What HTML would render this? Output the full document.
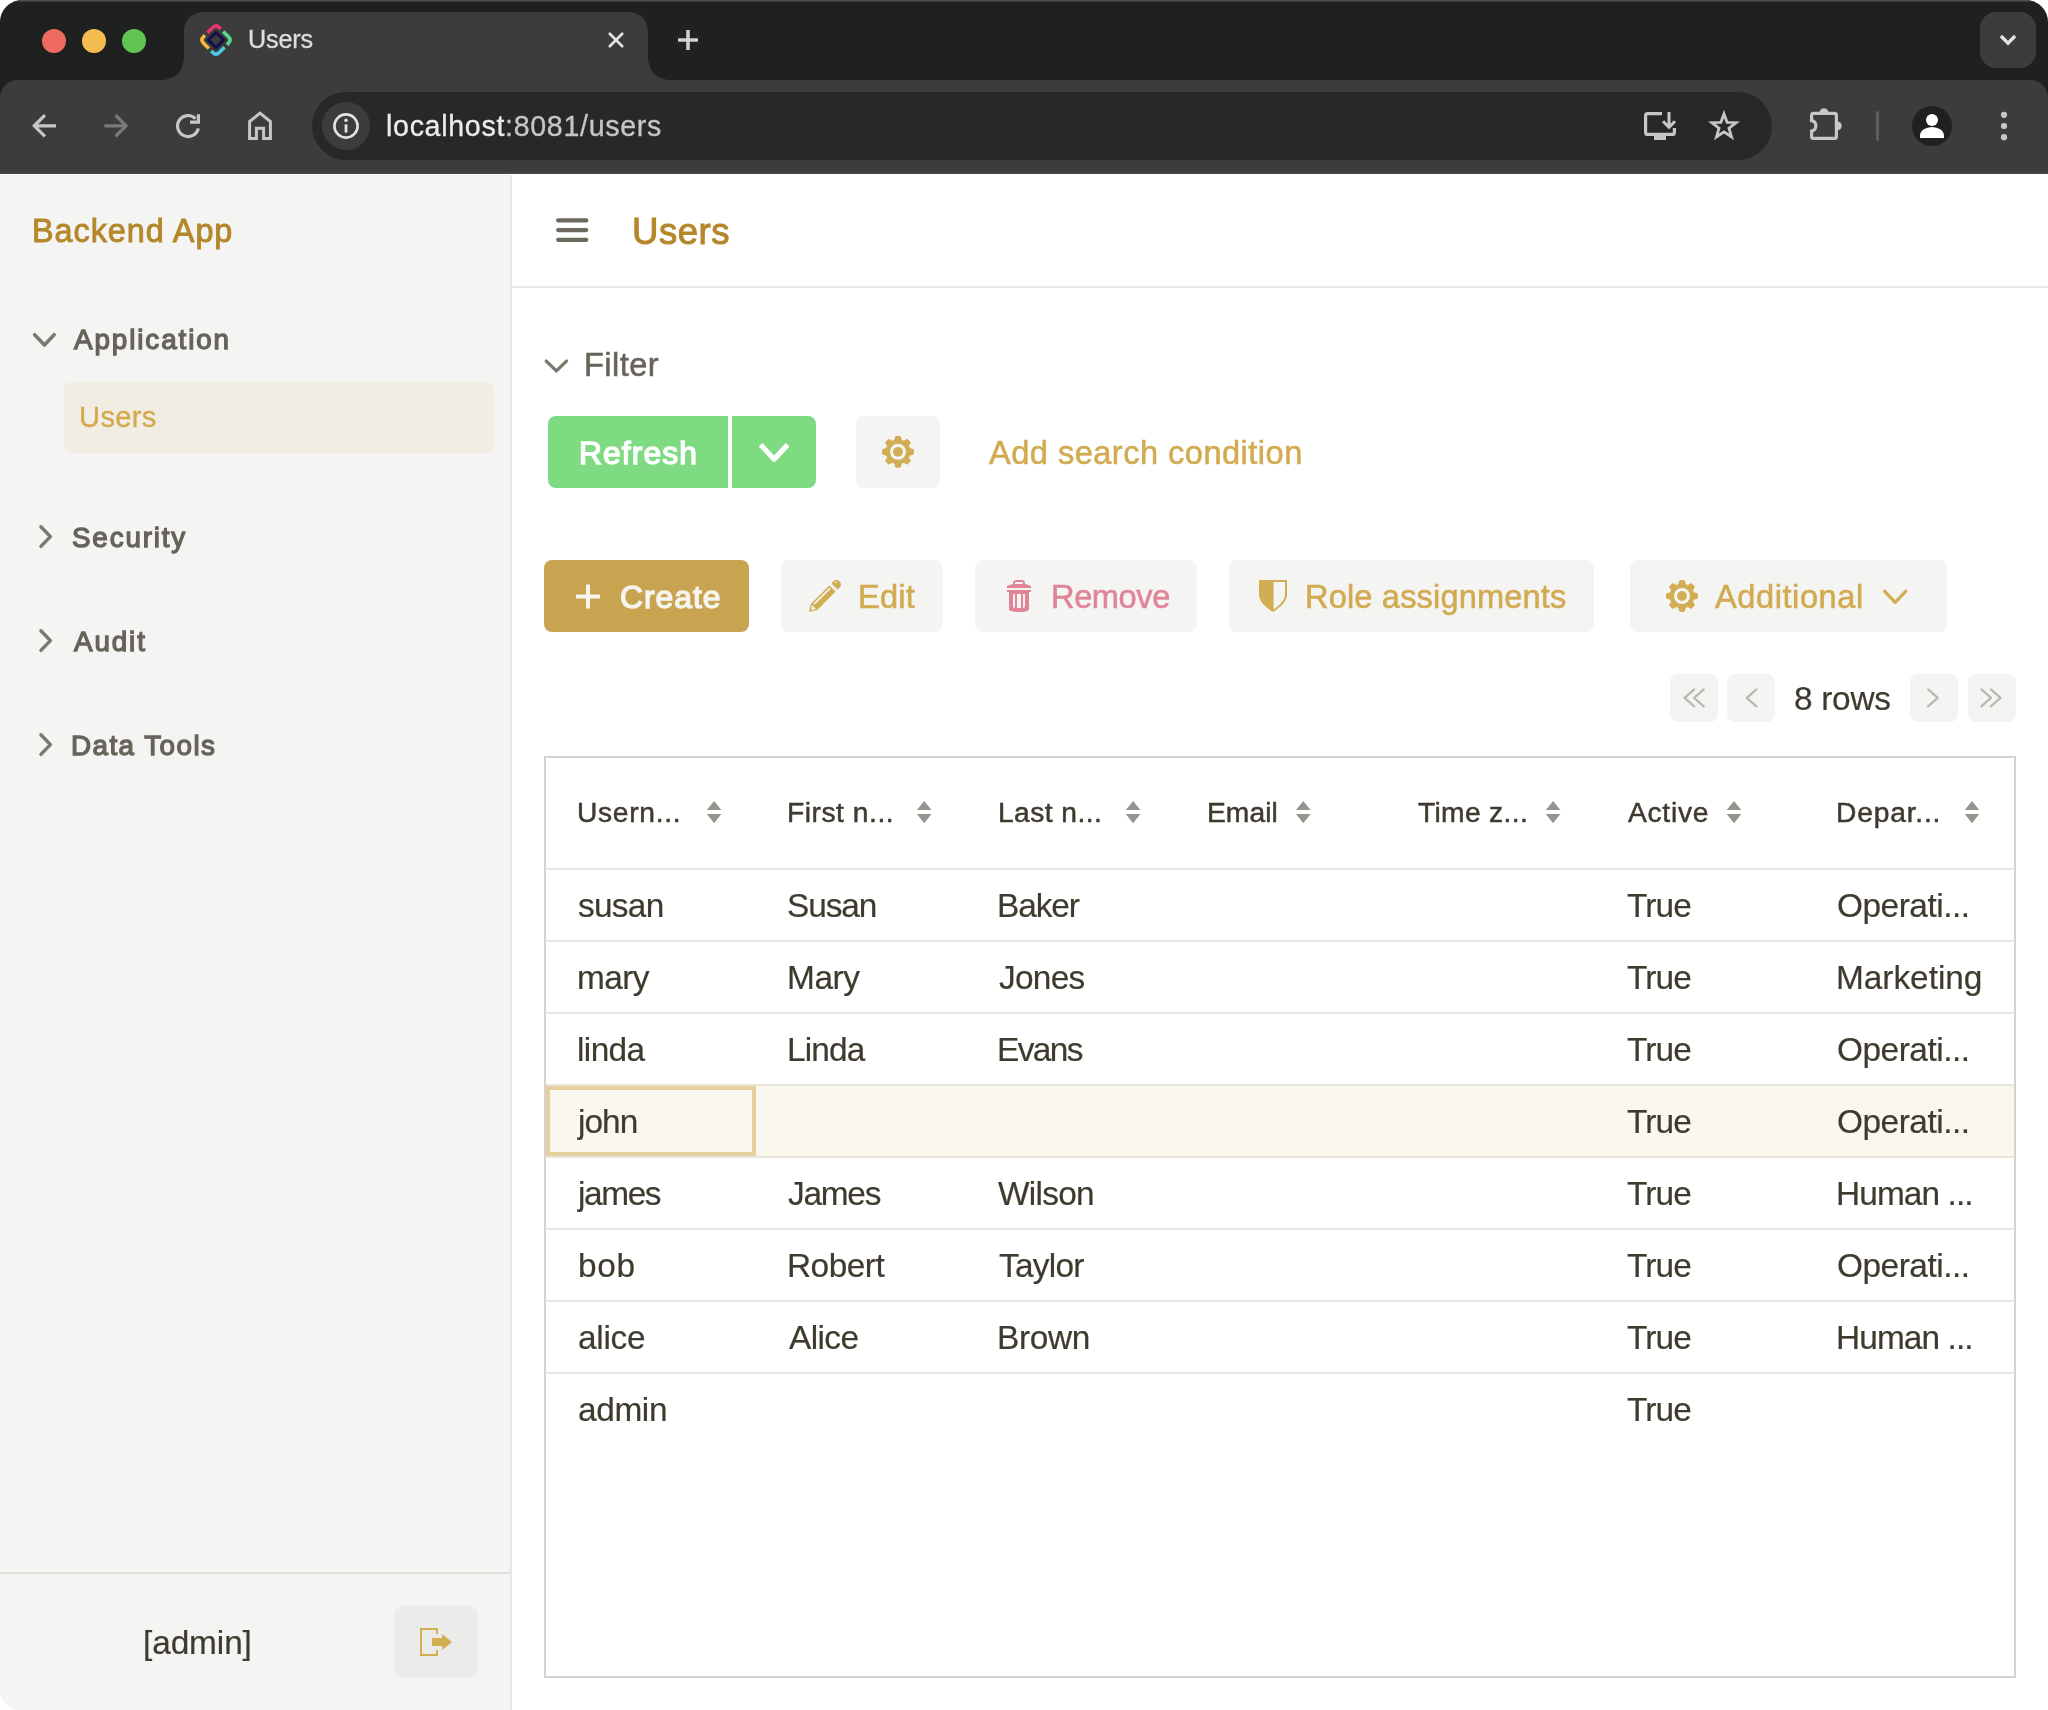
<!DOCTYPE html>
<html lang="en">
<head>
<meta charset="utf-8">
<title>Users</title>
<style>
*{box-sizing:border-box;margin:0;padding:0}
html,body{width:2048px;height:1710px;background:#fff;overflow:hidden}
body{font-family:"Liberation Sans",sans-serif;color:#3f3a2e;position:relative}
.win{position:absolute;left:0;top:0;width:2048px;height:1710px;border-radius:22px 22px 20px 20px;overflow:hidden;background:#fff}
.abs{position:absolute}
.t{position:absolute;white-space:nowrap;line-height:1;will-change:transform}
/* ---------- browser chrome ---------- */
.tabstrip{position:absolute;left:0;top:0;width:2048px;height:110px;background:#1f2020}
.hl{position:absolute;left:0;top:0;width:2048px;height:2px;background:linear-gradient(#5a5b5b,#2b2c2c)}
.toolbar{position:absolute;left:0;top:80px;width:2048px;height:94px;background:#3c3c3c;border-radius:18px 18px 0 0;border-bottom:2px solid #424544}
.omni{position:absolute;left:312px;top:12px;width:1460px;height:68px;border-radius:34px;background:#282828}
.dot{position:absolute;top:29px;width:24px;height:24px;border-radius:50%}
.chr{font-family:"Liberation Sans",sans-serif;color:#e3e3e3}
/* ---------- app ---------- */
.side{position:absolute;left:0;top:175px;width:510px;height:1535px;background:#f4f4f2}
.sideline{position:absolute;left:510px;top:175px;width:2px;height:1535px;background:#e8e7e5}
.main{position:absolute;left:512px;top:174px;width:1536px;height:1536px;background:#fff}
.gold{color:#b5872b}
.lgold{color:#d2a94f}
.grey{color:#67635a}
.btn{position:absolute;height:72px;border-radius:8px;background:#f4f4f2}
.pg{position:absolute;top:674px;width:48px;height:48px;border-radius:8px;background:#f4f4f2}
.hline{position:absolute;left:546px;width:1468px;height:2px;background:#e8e7e5}
.cell{position:absolute;white-space:nowrap;line-height:1;font-size:31px;color:#3f3a2e}
.hd{position:absolute;white-space:nowrap;line-height:1;font-size:28px;color:#3f3a2e;-webkit-text-stroke:0.5px #3f3a2e}
</style>
</head>
<body>
<div class="win">

<!-- ================= BROWSER CHROME ================= -->
<div class="tabstrip">
  <div class="hl"></div>
  <div class="dot" style="left:42px;background:#ee6a5e"></div>
  <div class="dot" style="left:82px;background:#f5bd4f"></div>
  <div class="dot" style="left:122px;background:#61c554"></div>
  <!-- active tab -->
  <svg class="abs" style="left:160px;top:12px" width="512" height="68" viewBox="0 0 512 68">
    <path d="M0 68 C14 68 24 60 24 44 V20 C24 8 32 0 44 0 H468 C480 0 488 8 488 20 V44 C488 60 498 68 512 68 Z" fill="#3c3c3c"/>
  </svg>
  <!-- favicon -->
  <svg class="abs" style="left:196px;top:20px" width="40" height="40" viewBox="-20 -20 40 40" fill="none" stroke-width="3.5">
   <g transform="rotate(45)">
    <path d="M-11.1 1.0 V-6.50 Q-11.1 -11.1 -6.50 -11.1 H-4.5" stroke="#e8336d" transform="rotate(0)"/>
    <path d="M-11.1 1.0 V-6.50 Q-11.1 -11.1 -6.50 -11.1 H-4.5" stroke="#5cd68c" transform="rotate(90)"/>
    <path d="M-11.1 1.0 V-6.50 Q-11.1 -11.1 -6.50 -11.1 H-4.5" stroke="#4dc9e6" transform="rotate(180)"/>
    <path d="M-11.1 1.0 V-6.50 Q-11.1 -11.1 -6.50 -11.1 H-4.5" stroke="#f7b93f" transform="rotate(270)"/>
    <rect x="-5.45" y="-5.45" width="10.9" height="10.9" stroke="#16104a" stroke-width="3.1" stroke-linejoin="round"/>
   </g>
  </svg>
  <!-- tab close -->
  <svg class="abs" style="left:604px;top:28px" width="24" height="24" viewBox="0 0 24 24" fill="none" stroke="#e3e3e3" stroke-width="2.6" stroke-linecap="butt"><path d="M5 5 L19 19 M19 5 L5 19"/></svg>
  <!-- new tab -->
  <svg class="abs" style="left:674px;top:26px" width="28" height="28" viewBox="0 0 28 28" fill="none" stroke="#cfcfcf" stroke-width="3.6"><path d="M14 4 V24 M4 14 H24"/></svg>
  <!-- tab search -->
  <div class="abs" style="left:1980px;top:12px;width:56px;height:56px;border-radius:16px;background:#3c3c3c"></div>
  <svg class="abs" style="left:1996px;top:28px" width="24" height="24" viewBox="0 0 24 24" fill="none" stroke="#e3e3e3" stroke-width="3.4"><path d="M4.900 8 L12 15.100 L19.100 8"/></svg>
</div>

<div class="toolbar">
  <div class="omni">
    <div class="abs" style="left:10px;top:10px;width:48px;height:48px;border-radius:50%;background:#3c3c3c"></div>
  </div>
  <div class="abs" style="left:1876px;top:31px;width:3px;height:30px;border-radius:2px;background:#5e5e5e"></div>
  <!-- profile -->
  <div class="abs" style="left:1912px;top:26px;width:40px;height:40px;border-radius:50%;background:#1f2020;overflow:hidden">
    <div class="abs" style="left:13.700px;top:7.800px;width:12.600px;height:12.600px;border-radius:50%;background:#fff"></div>
    <div class="abs" style="left:7.800px;top:20.800px;width:24.400px;height:11.400px;border-radius:12.200px 12.200px 0 0 / 9px 9px 0 0;background:#fff"></div>
  </div>
</div>
<!-- toolbar icons, absolute pixel coordinates -->
<svg class="abs" style="left:0;top:0" width="2048" height="176" viewBox="0 0 2048 176" fill="none" stroke="#c7c7c7" stroke-width="3.2">
  <!-- back -->
  <path d="M56 125.800 H35 M44.900 115.200 L34.300 125.800 L44.900 136.400"/>
  <!-- forward -->
  <path d="M104.400 125.800 H125.400 M115.500 115.200 L126.100 125.800 L115.500 136.400" stroke="#7a7a7a"/>
  <!-- reload -->
  <path d="M198.300 128.300 A10.500 10.500 0 1 1 195.500 118.600"/>
  <path d="M198.400 114.200 V122.100 H190"/>
  <!-- home -->
  <path d="M249.600 138.400 V121.500 L260 113.200 L270.400 121.500 V138.400 H263.600 V128.300 H256.400 V138.400 Z" stroke-width="3"/>
  <!-- info -->
  <circle cx="346" cy="126" r="11.600" stroke="#e3e3e3" stroke-width="2.600"/>
  <path d="M346 124.400 V132.600" stroke="#e3e3e3" stroke-width="2.800"/>
  <circle cx="346" cy="120.300" r="1.700" fill="#e3e3e3" stroke="none"/>
  <!-- install -->
  <path d="M1662 113.600 H1647.600 Q1645.600 113.600 1645.600 115.600 V132.400 Q1645.600 134.400 1647.600 134.400 H1672.400 Q1674.400 134.400 1674.400 132.400 V128" stroke-width="3.200"/>
  <path d="M1654 134.400 H1666 V140 H1654 Z" fill="#c7c7c7" stroke="none"/>
  <path d="M1669 112 V126.500 M1663 121.300 L1669 127.300 L1675 121.300" stroke-width="3"/>
  <!-- star -->
  <path d="M1724.0 113.9 L1727.1 122.3 L1736.1 122.7 L1729.0 128.2 L1731.5 136.9 L1724.0 131.9 L1716.5 136.9 L1719.0 128.2 L1711.9 122.7 L1720.9 122.3 Z" stroke-width="2.800" stroke-linejoin="miter"/>
  <!-- extensions -->
  <path d="M1813.500 113.400 H1834.500 Q1836.400 113.400 1836.400 115.300 V136.500 Q1836.400 138.400 1834.500 138.400 H1813.500 Q1811.600 138.400 1811.600 136.500 V131 A5.300 5.300 0 0 0 1811.600 120.600 V115.300 Q1811.600 113.400 1813.500 113.400 Z" stroke-width="3.200"/>
  <path d="M1819.600 112.600 A4.400 4.400 0 0 1 1828.400 112.600 Z" fill="#c7c7c7" stroke="none"/>
  <path d="M1837.400 121.400 A4.400 4.400 0 0 1 1837.400 130.200 Z" fill="#c7c7c7" stroke="none"/>
  <!-- menu dots -->
  <circle cx="2004" cy="114.800" r="3.100" fill="#c7c7c7" stroke="none"/>
  <circle cx="2004" cy="126" r="3.100" fill="#c7c7c7" stroke="none"/>
  <circle cx="2004" cy="137.200" r="3.100" fill="#c7c7c7" stroke="none"/>
</svg>

<!-- ================= APP ================= -->
<div class="side"></div>
<div class="sideline"></div>
<div class="main"></div>

<div class="abs" style="left:64px;top:382px;width:430px;height:71px;border-radius:8px;background:#f1ede2"></div>
<div class="abs" style="left:0;top:1572px;width:510px;height:2px;background:#e0dfdc"></div>
<div class="abs" style="left:394px;top:1606px;width:84px;height:72px;border-radius:9px;background:#ebebe9"></div>
<div class="abs" style="left:512px;top:286px;width:1536px;height:2px;background:#e9e8e6"></div>
<div class="abs" style="left:548px;top:416px;width:180px;height:72px;border-radius:8px 0 0 8px;background:#7edb82"></div>
<div class="abs" style="left:732px;top:416px;width:84px;height:72px;border-radius:0 8px 8px 0;background:#7edb82"></div>
<div class="btn" style="left:856px;top:416px;width:84px"></div>
<div class="btn" style="left:544px;top:560px;width:205px;background:#c8a450"></div>
<div class="btn" style="left:781px;top:560px;width:162px"></div>
<div class="btn" style="left:975px;top:560px;width:222px"></div>
<div class="btn" style="left:1229px;top:560px;width:365px"></div>
<div class="btn" style="left:1630px;top:560px;width:317px"></div>
<div class="pg" style="left:1670px"></div>
<div class="pg" style="left:1727px"></div>
<div class="pg" style="left:1910px"></div>
<div class="pg" style="left:1968px"></div>
<div class="abs" style="left:544px;top:756px;width:1472px;height:922px;border:2px solid #d4d3cf;background:#fff"></div>
<div class="abs" style="left:546px;top:1084px;width:1468px;height:74px;background:#faf7ee;border-top:2px solid #e9e6dc;border-bottom:2px solid #e9e6dc"></div>
<div class="abs" style="left:546px;top:1086px;width:210px;height:70px;border:4px solid #e6d09d"></div>
<div class="hline" style="top:868px"></div>
<div class="hline" style="top:940px"></div>
<div class="hline" style="top:1012px"></div>
<div class="hline" style="top:1228px"></div>
<div class="hline" style="top:1300px"></div>
<div class="hline" style="top:1372px"></div>
<svg class="abs" style="left:0;top:0" width="2048" height="1710" viewBox="0 0 2048 1710"><path d="M34.65 334.70 L44.40 344.90 L54.15 334.70" fill="none" stroke="#7b786e" stroke-width="3.6" stroke-linecap="round" stroke-linejoin="round"/>
<path d="M40.90 526.80 L50.40 536.60 L40.90 546.40" fill="none" stroke="#7b786e" stroke-width="3.4" stroke-linecap="round" stroke-linejoin="round"/>
<path d="M40.90 630.80 L50.40 640.60 L40.90 650.40" fill="none" stroke="#7b786e" stroke-width="3.4" stroke-linecap="round" stroke-linejoin="round"/>
<path d="M40.90 734.80 L50.40 744.60 L40.90 754.40" fill="none" stroke="#7b786e" stroke-width="3.4" stroke-linecap="round" stroke-linejoin="round"/>
<g transform="translate(420 1626) scale(2)" fill="#d3ae53" fill-rule="evenodd"><path d="M9 4V1H0V15H9V12H8V14H1V2H8V4Z M16 8L11 4V6H6V10H11V12Z"/></g>
<path d="M558.2 220.4 H586.2" stroke="#6c685d" stroke-width="4.3" stroke-linecap="round"/>
<path d="M558.2 230.1 H586.2" stroke="#6c685d" stroke-width="4.3" stroke-linecap="round"/>
<path d="M558.2 239.8 H586.2" stroke="#6c685d" stroke-width="4.3" stroke-linecap="round"/>
<path d="M546.30 361.10 L556.40 370.90 L566.50 361.10" fill="none" stroke="#7b786e" stroke-width="3.4" stroke-linecap="round" stroke-linejoin="round"/>
<path d="M760.60 444.80 L774.10 459.20 L787.60 444.80" fill="none" stroke="#ffffff" stroke-width="5.2" stroke-linecap="butt" stroke-linejoin="round"/>
<path d="M894.64 440.28 L895.77 436.46 L900.23 436.46 L901.36 440.28 L903.77 441.28 L907.27 439.38 L910.42 442.53 L908.52 446.03 L909.52 448.44 L913.34 449.57 L913.34 454.03 L909.52 455.16 L908.52 457.57 L910.42 461.07 L907.27 464.22 L903.77 462.32 L901.36 463.32 L900.23 467.14 L895.77 467.14 L894.64 463.32 L892.23 462.32 L888.73 464.22 L885.58 461.07 L887.48 457.57 L886.48 455.16 L882.66 454.03 L882.66 449.57 L886.48 448.44 L887.48 446.03 L885.58 442.53 L888.73 439.38 L892.23 441.28 Z" fill="#d1ae53" stroke="#d1ae53" stroke-width="1.0" stroke-linejoin="round"/><circle cx="898" cy="451.8" r="8" fill="#f4f4f2"/><circle cx="898" cy="451.8" r="4.9" fill="#d1ae53"/>
<path d="M1678.64 584.48 L1679.77 580.66 L1684.23 580.66 L1685.36 584.48 L1687.77 585.48 L1691.27 583.58 L1694.42 586.73 L1692.52 590.23 L1693.52 592.64 L1697.34 593.77 L1697.34 598.23 L1693.52 599.36 L1692.52 601.77 L1694.42 605.27 L1691.27 608.42 L1687.77 606.52 L1685.36 607.52 L1684.23 611.34 L1679.77 611.34 L1678.64 607.52 L1676.23 606.52 L1672.73 608.42 L1669.58 605.27 L1671.48 601.77 L1670.48 599.36 L1666.66 598.23 L1666.66 593.77 L1670.48 592.64 L1671.48 590.23 L1669.58 586.73 L1672.73 583.58 L1676.23 585.48 Z" fill="#d1ae53" stroke="#d1ae53" stroke-width="1.0" stroke-linejoin="round"/><circle cx="1682" cy="596" r="8" fill="#f4f4f2"/><circle cx="1682" cy="596" r="4.9" fill="#d1ae53"/>
<g transform="translate(572 580.6) scale(2)" fill="#f6f4ef" fill-rule="evenodd"><path d="M14 7H9V2H7V7H2V9H7V14H9V9H14Z"/></g>
<g transform="translate(809 580) scale(2)" fill="#d1ae53" fill-rule="nonzero"><path d="M1 11.9l-1 4.1 4.1-1 9.2-9.2-3.1-3.1-9.2 9.2zM1.500 15l-0.400-0.500 0.400-2 2 2-2 0.500zM10.900 4.400l-8.100 8-0.600-0.600 8.100-8 0.600 0.600z"/><path d="M15.300 0.700c-1.100-1.100-2.600-0.500-2.600-0.500l-1.500 1.500 3.100 3.100 1.500-1.500c0-0.100 0.600-1.500-0.500-2.600zM13.400 1.600l-0.500-0.500c0.600-0.600 1.100-0.100 1.100-0.100l-0.600 0.600z"/></g>
<g transform="translate(1003 580) scale(2)" fill="#e08597" fill-rule="evenodd"><path d="M2 4V3C3.500 2.450 4.300 2.120 5 2V1.500C5 0.670 5.670 0 6.500 0H9.500C10.330 0 11 0.670 11 1.500V2C11.700 2.120 12.500 2.450 14 3V4Z M6 2H10V1.500C10 1.220 9.780 1 9.500 1H6.500C6.220 1 6 1.220 6 1.500Z"/><path d="M2 5H14V6H13V14.700C13 15.400 10.800 16 8 16C5.200 16 3 15.400 3 14.700V6H2Z M5 7H6V14C5.400 14 5 13.600 5 13Z M7 7H9V14H7Z M10 7H11V13C11 13.600 10.600 14 10 14Z"/></g>
<g transform="translate(1257 580) scale(2)" fill="#d1ae53" fill-rule="evenodd"><path d="M1 0H15V7.500C15 11 11 14 8 16C5 14 1 11 1 7.500Z M8.300 1H14V7.500C14 10.300 10.800 13 8.300 14.700Z"/></g>
<path d="M1884.70 591.30 L1895.20 602.30 L1905.70 591.30" fill="none" stroke="#d1ae53" stroke-width="3.4" stroke-linecap="round" stroke-linejoin="round"/>
<path d="M1694.20 689.40 L1684.60 697.90 L1694.20 706.40" fill="none" stroke="#b9b7b0" stroke-width="2.2" stroke-linecap="round" stroke-linejoin="round"/>
<path d="M1703.70 689.40 L1694.10 697.90 L1703.70 706.40" fill="none" stroke="#b9b7b0" stroke-width="2.2" stroke-linecap="round" stroke-linejoin="round"/>
<path d="M1756.40 689.40 L1746.80 697.90 L1756.40 706.40" fill="none" stroke="#b9b7b0" stroke-width="2.2" stroke-linecap="round" stroke-linejoin="round"/>
<path d="M1928.10 689.40 L1937.70 697.90 L1928.10 706.40" fill="none" stroke="#b9b7b0" stroke-width="2.2" stroke-linecap="round" stroke-linejoin="round"/>
<path d="M1981.40 689.40 L1991.00 697.90 L1981.40 706.40" fill="none" stroke="#b9b7b0" stroke-width="2.2" stroke-linecap="round" stroke-linejoin="round"/>
<path d="M1990.90 689.40 L2000.50 697.90 L1990.90 706.40" fill="none" stroke="#b9b7b0" stroke-width="2.2" stroke-linecap="round" stroke-linejoin="round"/>
<path d="M706.8 810.1 L714.1 801.0 L721.4 810.1 Z" fill="#97948d"/><path d="M706.8 814.1 L714.1 823.2 L721.4 814.1 Z" fill="#97948d"/>
<path d="M916.9 810.1 L924.2 801.0 L931.5 810.1 Z" fill="#97948d"/><path d="M916.9 814.1 L924.2 823.2 L931.5 814.1 Z" fill="#97948d"/>
<path d="M1125.8 810.1 L1133.1 801.0 L1140.4 810.1 Z" fill="#97948d"/><path d="M1125.8 814.1 L1133.1 823.2 L1140.4 814.1 Z" fill="#97948d"/>
<path d="M1296.0 810.1 L1303.3 801.0 L1310.6 810.1 Z" fill="#97948d"/><path d="M1296.0 814.1 L1303.3 823.2 L1310.6 814.1 Z" fill="#97948d"/>
<path d="M1545.8 810.1 L1553.1 801.0 L1560.4 810.1 Z" fill="#97948d"/><path d="M1545.8 814.1 L1553.1 823.2 L1560.4 814.1 Z" fill="#97948d"/>
<path d="M1726.7 810.1 L1734.0 801.0 L1741.3 810.1 Z" fill="#97948d"/><path d="M1726.7 814.1 L1734.0 823.2 L1741.3 814.1 Z" fill="#97948d"/>
<path d="M1964.7 810.1 L1972.0 801.0 L1979.3 810.1 Z" fill="#97948d"/><path d="M1964.7 814.1 L1972.0 823.2 L1979.3 814.1 Z" fill="#97948d"/></svg>
<div class="t" style="left:248.00px;top:27.00px;font-size:25.2px;color:#dedede;letter-spacing:-0.152px;-webkit-text-stroke:0.3px">Users</div>
<div class="t" style="left:386.00px;top:112.00px;font-size:28.6px;color:#ececec;letter-spacing:0.685px;-webkit-text-stroke:0.3px">localhost<span style="color:#c6c6c6">:8081/users</span></div>
<div class="t" style="left:32.00px;top:215.00px;font-size:32.4px;color:#b5872b;letter-spacing:0.949px;-webkit-text-stroke:0.9px">Backend App</div>
<div class="t" style="left:74.00px;top:326.00px;font-size:27.8px;color:#67635a;letter-spacing:1.908px;-webkit-text-stroke:1.3px">Application</div>
<div class="t" style="left:79.00px;top:403.00px;font-size:29.2px;color:#d4a94c;letter-spacing:0.309px;-webkit-text-stroke:0.3px">Users</div>
<div class="t" style="left:72.00px;top:524.00px;font-size:27.8px;color:#67635a;letter-spacing:1.828px;-webkit-text-stroke:1.3px">Security</div>
<div class="t" style="left:74.00px;top:628.00px;font-size:27.8px;color:#67635a;letter-spacing:1.886px;-webkit-text-stroke:1.3px">Audit</div>
<div class="t" style="left:71.00px;top:732.00px;font-size:27.8px;color:#67635a;letter-spacing:1.456px;-webkit-text-stroke:1.3px">Data Tools</div>
<div class="t" style="left:143.00px;top:1626.00px;font-size:33.4px;color:#3f3a2e;letter-spacing:-0.102px;-webkit-text-stroke:0.2px">[admin]</div>
<div class="t" style="left:632.00px;top:214.00px;font-size:36.6px;color:#b5872b;letter-spacing:0.521px;-webkit-text-stroke:1.0px">Users</div>
<div class="t" style="left:584.00px;top:349.00px;font-size:32.6px;color:#67635a;letter-spacing:0.429px;-webkit-text-stroke:0.55px">Filter</div>
<div class="t" style="left:579.00px;top:438.00px;font-size:31.8px;color:#ffffff;letter-spacing:1.091px;-webkit-text-stroke:1.4px">Refresh</div>
<div class="t" style="left:989.00px;top:437.00px;font-size:32.6px;color:#d2aa50;letter-spacing:0.473px;-webkit-text-stroke:0.55px">Add search condition</div>
<div class="t" style="left:620.00px;top:582.00px;font-size:31.8px;color:#f6f4ef;letter-spacing:1.022px;-webkit-text-stroke:1.4px">Create</div>
<div class="t" style="left:858.00px;top:581.00px;font-size:32.6px;color:#d2aa50;letter-spacing:0.198px;-webkit-text-stroke:0.55px">Edit</div>
<div class="t" style="left:1051.00px;top:581.00px;font-size:32.6px;color:#e08597;letter-spacing:-0.392px;-webkit-text-stroke:0.55px">Remove</div>
<div class="t" style="left:1305.00px;top:581.00px;font-size:32.6px;color:#d2aa50;letter-spacing:0.160px;-webkit-text-stroke:0.55px">Role assignments</div>
<div class="t" style="left:1715.00px;top:581.00px;font-size:32.6px;color:#d2aa50;letter-spacing:0.565px;-webkit-text-stroke:0.55px">Additional</div>
<div class="t" style="left:1794.00px;top:682.00px;font-size:33.4px;color:#3f3a2e;letter-spacing:-0.283px;-webkit-text-stroke:0.2px">8 rows</div>
<div class="t" style="left:577.00px;top:798.00px;font-size:28.2px;color:#3f3a2e;letter-spacing:0.707px;-webkit-text-stroke:0.5px">Usern...</div>
<div class="t" style="left:787.00px;top:798.00px;font-size:28.2px;color:#3f3a2e;letter-spacing:0.539px;-webkit-text-stroke:0.5px">First n...</div>
<div class="t" style="left:998.00px;top:798.00px;font-size:28.2px;color:#3f3a2e;letter-spacing:0.440px;-webkit-text-stroke:0.5px">Last n...</div>
<div class="t" style="left:1207.00px;top:798.00px;font-size:28.2px;color:#3f3a2e;letter-spacing:0.072px;-webkit-text-stroke:0.5px">Email</div>
<div class="t" style="left:1418.00px;top:798.00px;font-size:28.2px;color:#3f3a2e;letter-spacing:0.339px;-webkit-text-stroke:0.5px">Time z...</div>
<div class="t" style="left:1628.00px;top:798.00px;font-size:28.2px;color:#3f3a2e;letter-spacing:0.737px;-webkit-text-stroke:0.5px">Active</div>
<div class="t" style="left:1836.00px;top:798.00px;font-size:28.2px;color:#3f3a2e;letter-spacing:0.812px;-webkit-text-stroke:0.5px">Depar...</div>
<div class="t" style="left:578.00px;top:889.00px;font-size:33.4px;color:#3f3a2e;letter-spacing:-0.714px;-webkit-text-stroke:0.2px">susan</div>
<div class="t" style="left:787.00px;top:889.00px;font-size:33.4px;color:#3f3a2e;letter-spacing:-1.084px;-webkit-text-stroke:0.2px">Susan</div>
<div class="t" style="left:997.00px;top:889.00px;font-size:33.4px;color:#3f3a2e;letter-spacing:-1.069px;-webkit-text-stroke:0.2px">Baker</div>
<div class="t" style="left:1627.00px;top:889.00px;font-size:33.4px;color:#3f3a2e;letter-spacing:-0.855px;-webkit-text-stroke:0.2px">True</div>
<div class="t" style="left:1837.00px;top:889.00px;font-size:33.4px;color:#3f3a2e;letter-spacing:-0.465px;-webkit-text-stroke:0.2px">Operati...</div>
<div class="t" style="left:577.00px;top:961.00px;font-size:33.4px;color:#3f3a2e;letter-spacing:-0.546px;-webkit-text-stroke:0.2px">mary</div>
<div class="t" style="left:787.00px;top:961.00px;font-size:33.4px;color:#3f3a2e;letter-spacing:-0.422px;-webkit-text-stroke:0.2px">Mary</div>
<div class="t" style="left:999.00px;top:961.00px;font-size:33.4px;color:#3f3a2e;letter-spacing:-0.729px;-webkit-text-stroke:0.2px">Jones</div>
<div class="t" style="left:1627.00px;top:961.00px;font-size:33.4px;color:#3f3a2e;letter-spacing:-0.855px;-webkit-text-stroke:0.2px">True</div>
<div class="t" style="left:1836.00px;top:961.00px;font-size:33.4px;color:#3f3a2e;letter-spacing:-0.025px;-webkit-text-stroke:0.2px">Marketing</div>
<div class="t" style="left:577.00px;top:1033.00px;font-size:33.4px;color:#3f3a2e;letter-spacing:-0.604px;-webkit-text-stroke:0.2px">linda</div>
<div class="t" style="left:787.00px;top:1033.00px;font-size:33.4px;color:#3f3a2e;letter-spacing:-0.837px;-webkit-text-stroke:0.2px">Linda</div>
<div class="t" style="left:997.00px;top:1033.00px;font-size:33.4px;color:#3f3a2e;letter-spacing:-1.565px;-webkit-text-stroke:0.2px">Evans</div>
<div class="t" style="left:1627.00px;top:1033.00px;font-size:33.4px;color:#3f3a2e;letter-spacing:-0.855px;-webkit-text-stroke:0.2px">True</div>
<div class="t" style="left:1837.00px;top:1033.00px;font-size:33.4px;color:#3f3a2e;letter-spacing:-0.465px;-webkit-text-stroke:0.2px">Operati...</div>
<div class="t" style="left:578.00px;top:1105.00px;font-size:33.4px;color:#3f3a2e;letter-spacing:-0.940px;-webkit-text-stroke:0.2px">john</div>
<div class="t" style="left:1627.00px;top:1105.00px;font-size:33.4px;color:#3f3a2e;letter-spacing:-0.855px;-webkit-text-stroke:0.2px">True</div>
<div class="t" style="left:1837.00px;top:1105.00px;font-size:33.4px;color:#3f3a2e;letter-spacing:-0.465px;-webkit-text-stroke:0.2px">Operati...</div>
<div class="t" style="left:578.00px;top:1177.00px;font-size:33.4px;color:#3f3a2e;letter-spacing:-1.387px;-webkit-text-stroke:0.2px">james</div>
<div class="t" style="left:788.00px;top:1177.00px;font-size:33.4px;color:#3f3a2e;letter-spacing:-1.253px;-webkit-text-stroke:0.2px">James</div>
<div class="t" style="left:998.00px;top:1177.00px;font-size:33.4px;color:#3f3a2e;letter-spacing:-0.703px;-webkit-text-stroke:0.2px">Wilson</div>
<div class="t" style="left:1627.00px;top:1177.00px;font-size:33.4px;color:#3f3a2e;letter-spacing:-0.855px;-webkit-text-stroke:0.2px">True</div>
<div class="t" style="left:1836.00px;top:1177.00px;font-size:33.4px;color:#3f3a2e;letter-spacing:-0.890px;-webkit-text-stroke:0.2px">Human ...</div>
<div class="t" style="left:578.00px;top:1249.00px;font-size:33.4px;color:#3f3a2e;letter-spacing:0.664px;-webkit-text-stroke:0.2px">bob</div>
<div class="t" style="left:787.00px;top:1249.00px;font-size:33.4px;color:#3f3a2e;letter-spacing:-0.503px;-webkit-text-stroke:0.2px">Robert</div>
<div class="t" style="left:999.00px;top:1249.00px;font-size:33.4px;color:#3f3a2e;letter-spacing:-0.742px;-webkit-text-stroke:0.2px">Taylor</div>
<div class="t" style="left:1627.00px;top:1249.00px;font-size:33.4px;color:#3f3a2e;letter-spacing:-0.855px;-webkit-text-stroke:0.2px">True</div>
<div class="t" style="left:1837.00px;top:1249.00px;font-size:33.4px;color:#3f3a2e;letter-spacing:-0.465px;-webkit-text-stroke:0.2px">Operati...</div>
<div class="t" style="left:578.00px;top:1321.00px;font-size:33.4px;color:#3f3a2e;letter-spacing:-0.297px;-webkit-text-stroke:0.2px">alice</div>
<div class="t" style="left:789.00px;top:1321.00px;font-size:33.4px;color:#3f3a2e;letter-spacing:-0.594px;-webkit-text-stroke:0.2px">Alice</div>
<div class="t" style="left:997.00px;top:1321.00px;font-size:33.4px;color:#3f3a2e;letter-spacing:-0.332px;-webkit-text-stroke:0.2px">Brown</div>
<div class="t" style="left:1627.00px;top:1321.00px;font-size:33.4px;color:#3f3a2e;letter-spacing:-0.855px;-webkit-text-stroke:0.2px">True</div>
<div class="t" style="left:1836.00px;top:1321.00px;font-size:33.4px;color:#3f3a2e;letter-spacing:-0.890px;-webkit-text-stroke:0.2px">Human ...</div>
<div class="t" style="left:578.00px;top:1393.00px;font-size:33.4px;color:#3f3a2e;letter-spacing:-0.362px;-webkit-text-stroke:0.2px">admin</div>
<div class="t" style="left:1627.00px;top:1393.00px;font-size:33.4px;color:#3f3a2e;letter-spacing:-0.855px;-webkit-text-stroke:0.2px">True</div>

</div>
</body>
</html>
